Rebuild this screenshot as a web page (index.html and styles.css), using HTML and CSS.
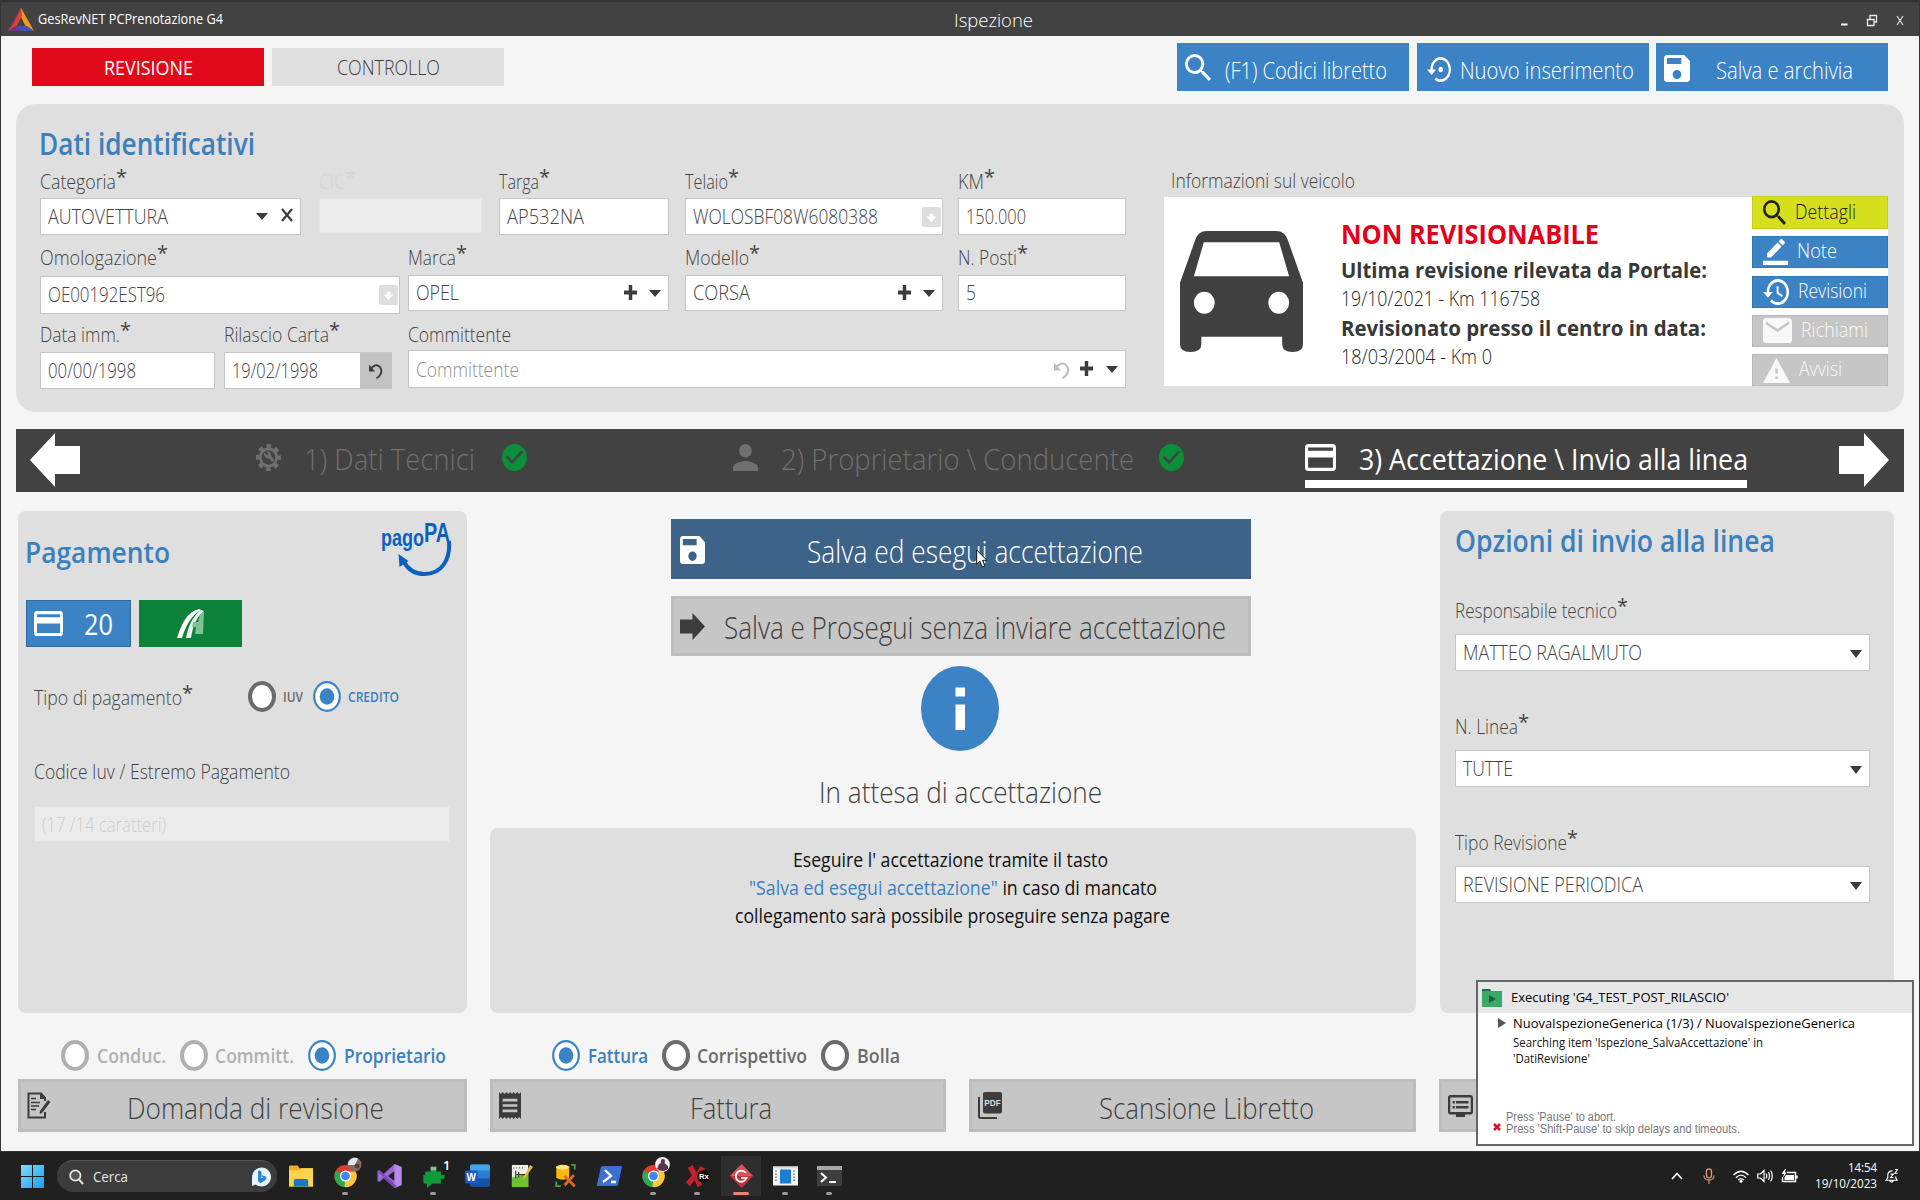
FILE: index.html
```
<!DOCTYPE html>
<html lang="it">
<head>
<meta charset="utf-8">
<title>GesRevNET PCPrenotazione G4</title>
<link rel="stylesheet" href="styles.css">
</head>
<body>
<svg class="defs" width="0" height="0">
  <symbol id="search" viewBox="3 3 17.5 17.5" preserveAspectRatio="none"><path d="M15.5 14h-.79l-.28-.27A6.471 6.471 0 0 0 16 9.5 6.5 6.5 0 1 0 9.5 16c1.61 0 3.09-.59 4.23-1.57l.27.28v.79l5 4.99L20.49 19l-4.99-5zm-6 0C7.01 14 5 11.99 5 9.5S7.01 5 9.5 5 14 7.01 14 9.5 11.99 14 9.5 14z"/></symbol>
  <symbol id="restore" viewBox="0 3 21 18" preserveAspectRatio="none"><path d="M14 12c0-1.1-.9-2-2-2s-2 .9-2 2 .9 2 2 2 2-.9 2-2zm-2-9c-4.97 0-9 4.03-9 9H0l4 4 4-4H5c0-3.87 3.13-7 7-7s7 3.13 7 7-3.13 7-7 7c-1.51 0-2.91-.49-4.06-1.3l-1.42 1.44C8.04 20.3 9.94 21 12 21c4.97 0 9-4.03 9-9s-4.03-9-9-9z"/></symbol>
  <symbol id="history" viewBox="1 3 21 18" preserveAspectRatio="none"><path d="M13 3a9 9 0 0 0-9 9H1l3.89 3.89.07.14L9 12H6c0-3.87 3.13-7 7-7s7 3.13 7 7-3.13 7-7 7c-1.93 0-3.68-.79-4.94-2.06l-1.42 1.42A8.954 8.954 0 0 0 13 21a9 9 0 0 0 0-18zm-1 5v5l4.28 2.54.72-1.21-3.5-2.08V8H12z"/></symbol>
  <symbol id="save" viewBox="3 3 18 18" preserveAspectRatio="none"><path d="M17 3H5c-1.11 0-2 .9-2 2v14c0 1.1.89 2 2 2h14c1.1 0 2-.9 2-2V7l-4-4zm-5 16c-1.66 0-3-1.34-3-3s1.34-3 3-3 3 1.34 3 3-1.34 3-3 3zm3-10H5V5h10v4z"/></symbol>
  <symbol id="pencil" viewBox="0 0 24 24" preserveAspectRatio="none"><path d="M17.75 7L14 3.25l-10 10V17h3.75l10-10zm2.96-2.96a.996.996 0 0 0 0-1.41L18.37.29a.996.996 0 0 0-1.41 0L15 2.25 18.75 6l1.96-1.96zM0 20h24v4H0z"/></symbol>
  <symbol id="mail" viewBox="2 4 20 16" preserveAspectRatio="none"><path d="M20 4H4c-1.1 0-1.99.9-1.99 2L2 18c0 1.1.9 2 2 2h16c1.1 0 2-.9 2-2V6c0-1.1-.9-2-2-2zm0 4l-8 5-8-5V6l8 5 8-5v2z"/></symbol>
  <symbol id="warning" viewBox="1 2 22 19" preserveAspectRatio="none"><path d="M1 21h22L12 2 1 21zm12-3h-2v-2h2v2zm0-4h-2v-4h2v4z"/></symbol>
  <symbol id="car" viewBox="0 0 248 363" preserveAspectRatio="none"><path fill-rule="evenodd" d="M54 0H194C206 0 214 10 218 30L248 155V340Q248 363 227 363Q206 363 206 340V317H43V340Q43 363 21 363Q0 363 0 340V155L30 30C34 10 42 0 54 0ZM48 34L28 136H220L200 34ZM28 215A21 33 0 1 0 70 215A21 33 0 1 0 28 215ZM178 215A21 33 0 1 0 220 215A21 33 0 1 0 178 215Z"/></symbol>
  <symbol id="person" viewBox="4 4 16 16" preserveAspectRatio="none"><path d="M12 12c2.21 0 4-1.79 4-4s-1.79-4-4-4-4 1.79-4 4 1.79 4 4 4zm0 2c-2.67 0-8 1.34-8 4v2h16v-2c0-2.66-5.33-4-8-4z"/></symbol>
  <symbol id="card" viewBox="2 4 20 16" preserveAspectRatio="none"><path d="M20 4H4c-1.11 0-2 .89-2 2v12c0 1.11.89 2 2 2h16c1.11 0 2-.89 2-2V6c0-1.11-.89-2-2-2zm0 14H4v-6h16v6zm0-10H4V6h16v2z"/></symbol>
  <symbol id="check" viewBox="2 2 20 20" preserveAspectRatio="none"><path d="M12 2C6.48 2 2 6.48 2 12s4.48 10 10 10 10-4.48 10-10S17.52 2 12 2zm-2 15l-5-5 1.41-1.41L10 14.17l7.59-7.59L19 8l-9 9z"/></symbol>
  <symbol id="gear" viewBox="0 0 24 24" preserveAspectRatio="none"><circle cx="12" cy="12" r="10.3" fill="none" stroke="currentColor" stroke-width="3.4" stroke-dasharray="4.3 3.79" stroke-dashoffset="2.1"/><circle cx="12" cy="12" r="7.8" fill="none" stroke="currentColor" stroke-width="2.6"/><path d="M8 7.6l2.4 2.3 1.4-1.4-1.8-2c2.800-.6 5 1.500 4.400 4.200l3.200 3.300-2 2-3.300-3.300c-3 .7-5.300-2.200-4.300-5.100z"/></symbol>
  <symbol id="receipt" viewBox="3 2 18 20" preserveAspectRatio="none"><path d="M18 17H6v-2h12v2zm0-4H6v-2h12v2zm0-4H6V7h12v2zM3 22l1.500-1.500L6 22l1.500-1.500L9 22l1.500-1.500L12 22l1.500-1.500L15 22l1.500-1.500L18 22l1.500-1.500L21 22V2l-1.500 1.500L18 2l-1.500 1.500L15 2l-1.500 1.500L12 2l-1.500 1.500L9 2 7.500 3.500 6 2 4.500 3.500 3 2v20z"/></symbol>
  <symbol id="dvr" viewBox="1 3 22 18" preserveAspectRatio="none"><path d="M21 3H3c-1.100 0-2 .9-2 2v12c0 1.100.9 2 2 2h5v2h8v-2h5c1.100 0 1.990-.9 1.990-2L23 5c0-1.100-.9-2-2-2zm0 14H3V5h18v12zm-2-9H8v2h11V8zm0 4H8v2h11v-2zM7 8H5v2h2V8zm0 4H5v2h2v-2z"/></symbol>
  <symbol id="undo" viewBox="0 0 16 20" preserveAspectRatio="none"><path d="M2 8C5 2.500 9 1.500 12 4.500C16 9 14 16 8.500 19" fill="none" stroke="currentColor" stroke-width="2.200"/><path d="M0 2l0 8.500h7z"/></symbol>
  <symbol id="tri" viewBox="0 0 12 7" preserveAspectRatio="none"><path d="M0 0H12L6 7Z"/></symbol>
  <symbol id="plus" viewBox="0 0 12 14" preserveAspectRatio="none"><path d="M4.400 0H7.600V5.200H12V8.800H7.600V14H4.400V8.800H0V5.200H4.400Z"/></symbol>
  <symbol id="arrow" viewBox="0 0 50 54" preserveAspectRatio="none"><path d="M0 13H25V0L50 27L25 54V41H0Z"/></symbol>
  <symbol id="lookup" viewBox="0 0 20 21" preserveAspectRatio="none"><rect width="20" height="21" rx="2" fill="#dedede"/><path d="M8 7h4v3h3l-5 6-5-6h3z" fill="#fff"/></symbol>
  <symbol id="radio-off" viewBox="0 0 28 31"><ellipse cx="14" cy="15.500" rx="12" ry="13.400" fill="#fff" stroke="currentColor" stroke-width="4"/></symbol>
  <symbol id="radio-on" viewBox="0 0 28 31"><ellipse cx="14" cy="15.500" rx="12.800" ry="14.300" fill="#fff" stroke="#3b83c4" stroke-width="2.200"/><ellipse cx="14" cy="15.500" rx="7.300" ry="8.300" fill="#3b83c4"/></symbol>
  <symbol id="chrome" viewBox="0 0 26 26"><circle cx="13" cy="13" r="12" fill="#e33b2e"/><path d="M13 13L2.600 7A12 12 0 0 0 12.500 25Z" fill="#2da94f"/><path d="M13 13L12 25A12 12 0 0 0 24 8H13Z" fill="#fcc934"/><circle cx="13" cy="13" r="6" fill="#fff"/><circle cx="13" cy="13" r="4.700" fill="#4285f4"/></symbol>
</svg>

<div class="window">
  <header class="titlebar">
    <svg class="logo" viewBox="0 0 26 24"><path d="M13 0L26 23L18 19L12 7Z" fill="#f39a1e"/><path d="M13 0L0 23L8 19L14 8Z" fill="#d9442f"/><path d="M13 0L0 23L6 15Z" fill="#8d2f72"/><path d="M0 23L8 18H19L26 23Z" fill="#3e55a5"/><path d="M0 23L8 18L12 23Z" fill="#7b2e86"/></svg>
    <span class="app-name t" data-w="185">GesRevNET PCPrenotazione G4</span>
    <span class="page-name t" data-w="79">Ispezione</span>
    <div class="win-buttons">
      <svg viewBox="0 0 64 14"><path d="M1 10.500H7.500" stroke="#fff" stroke-width="2"/><path d="M27.500 5.500h6.500v6h-6.500zM30 5V1.500h6.500V8H34.500" fill="none" stroke="#e8e8e8" stroke-width="1.300"/><path d="M57 2L63 11M63 2L57 11" stroke="#e8e8e8" stroke-width="1.100"/></svg>
    </div>
  </header>

  <div class="toolbar">
    <button class="tab tab-active"><span class="t" data-w="89">REVISIONE</span></button>
    <button class="tab"><span class="t" data-w="103">CONTROLLO</span></button>
    <div class="actions">
      <button class="action"><svg class="ic-search"><use href="#search"/></svg><span class="t" data-w="162">(F1) Codici libretto</span></button>
      <button class="action"><svg class="ic-restore"><use href="#restore"/></svg><span class="t" data-w="174">Nuovo inserimento</span></button>
      <button class="action action-save"><svg class="ic-save"><use href="#save"/></svg><span class="t" data-w="137">Salva e archivia</span></button>
    </div>
  </div>

  <section class="ident">
    <div class="ident-form">
      <h2><span class="t" data-w="216">Dati identificativi</span></h2>
      <div class="row row-a">
        <label class="field"><span class="label"><span class="t" data-w="76">Categoria</span><i>*</i></span>
          <span class="input"><span class="t" data-w="120">AUTOVETTURA</span><span class="tools"><svg class="ic-tri"><use href="#tri"/></svg><svg class="ic-x" viewBox="0 0 12 14"><path d="M1 1L11 13M11 1L1 13" stroke="#3c3c3c" stroke-width="2.200"/></svg></span></span></label>
        <label class="field faded"><span class="label"><span class="t" data-w="26">CIC</span><i>*</i></span><span class="input"></span></label>
        <label class="field"><span class="label"><span class="t" data-w="40">Targa</span><i>*</i></span><span class="input"><span class="t" data-w="77">AP532NA</span></span></label>
        <label class="field"><span class="label"><span class="t" data-w="43">Telaio</span><i>*</i></span><span class="input"><span class="t" data-w="185">WOLOSBF08W6080388</span><svg class="ic-lookup"><use href="#lookup"/></svg></span></label>
        <label class="field"><span class="label"><span class="t" data-w="26">KM</span><i>*</i></span><span class="input"><span class="t" data-w="60">150.000</span></span></label>
      </div>
      <div class="row row-b">
        <label class="field low"><span class="label"><span class="t" data-w="117">Omologazione</span><i>*</i></span><span class="input"><span class="t" data-w="117">OE00192EST96</span><svg class="ic-lookup"><use href="#lookup"/></svg></span></label>
        <label class="field"><span class="label"><span class="t" data-w="48">Marca</span><i>*</i></span><span class="input"><span class="t" data-w="43">OPEL</span><span class="tools"><svg class="ic-plus"><use href="#plus"/></svg><svg class="ic-tri"><use href="#tri"/></svg></span></span></label>
        <label class="field"><span class="label"><span class="t" data-w="64">Modello</span><i>*</i></span><span class="input"><span class="t" data-w="57">CORSA</span><span class="tools"><svg class="ic-plus"><use href="#plus"/></svg><svg class="ic-tri"><use href="#tri"/></svg></span></span></label>
        <label class="field"><span class="label"><span class="t" data-w="59">N. Posti</span><i>*</i></span><span class="input"><span class="t" data-w="10">5</span></span></label>
      </div>
      <div class="row row-c">
        <label class="field low"><span class="label"><span class="t" data-w="80">Data imm.</span><i>*</i></span><span class="input"><span class="t" data-w="88">00/00/1998</span></span></label>
        <label class="field low"><span class="label"><span class="t" data-w="105">Rilascio Carta</span><i>*</i></span><span class="input with-button"><span class="t" data-w="86">19/02/1998</span><span class="input-button"><svg class="ic-undo"><use href="#undo"/></svg></span></span></label>
        <label class="field"><span class="label"><span class="t" data-w="103">Committente</span></span><span class="input"><span class="t placeholder" data-w="103">Committente</span><span class="tools"><svg class="ic-undo pale"><use href="#undo"/></svg><svg class="ic-plus"><use href="#plus"/></svg><svg class="ic-tri"><use href="#tri"/></svg></span></span></label>
      </div>
    </div>
    <div class="vehicle">
      <div class="vehicle-title"><span class="t" data-w="184">Informazioni sul veicolo</span></div>
      <div class="vehicle-body">
        <div class="vehicle-card">
          <svg class="ic-car"><use href="#car"/></svg>
          <div class="vehicle-text">
            <p class="alert"><span class="t" data-w="258">NON REVISIONABILE</span></p>
            <p class="strong"><span class="t" data-w="366">Ultima revisione rilevata da Portale:</span></p>
            <p><span class="t" data-w="199">19/10/2021 - Km 116758</span></p>
            <p class="strong"><span class="t" data-w="365">Revisionato presso il centro in data:</span></p>
            <p><span class="t" data-w="151">18/03/2004 - Km 0</span></p>
          </div>
        </div>
        <div class="vehicle-buttons">
          <button class="vb vb-lime"><svg class="i1"><use href="#search"/></svg><span class="t" data-w="61">Dettagli</span></button>
          <button class="vb vb-blue"><svg class="i2"><use href="#pencil"/></svg><span class="t" data-w="40">Note</span></button>
          <button class="vb vb-blue"><svg class="i3"><use href="#history"/></svg><span class="t" data-w="69">Revisioni</span></button>
          <button class="vb vb-off"><svg class="i4"><use href="#mail"/></svg><span class="t" data-w="67">Richiami</span></button>
          <button class="vb vb-off"><svg class="i5"><use href="#warning"/></svg><span class="t" data-w="43">Avvisi</span></button>
        </div>
      </div>
    </div>
  </section>

  <nav class="steps">
    <svg class="step-arrow back"><use href="#arrow"/></svg>
    <div class="step step1"><svg class="ic24"><use href="#gear"/></svg><span class="t" data-w="171">1) Dati Tecnici</span><svg class="ic24 ok"><use href="#check"/></svg></div>
    <div class="step step2"><svg class="ic24"><use href="#person"/></svg><span class="t" data-w="353">2) Proprietario \ Conducente</span><svg class="ic24 ok"><use href="#check"/></svg></div>
    <div class="step step3"><svg class="ic-card"><use href="#card"/></svg><span class="t" data-w="389">3) Accettazione \ Invio alla linea</span></div>
    <svg class="step-arrow next"><use href="#arrow"/></svg>
  </nav>

  <main class="columns">
    <section class="panel payment">
      <div class="payment-head">
        <h2><span class="t" data-w="145">Pagamento</span></h2>
        <div class="pagopa">
          <svg viewBox="0 0 70 53"><path d="M67.500 17C69 36 60 50 43 50C33 50 26 45 22 37" fill="none" stroke="#0b5fbf" stroke-width="4"/><path d="M17 30L27 37L18 43Z" fill="#0b5fbf"/></svg>
          <span class="pago t" data-w="43">pago</span><span class="pa t" data-w="26">PA</span>
        </div>
      </div>
      <div class="pay-buttons">
        <button class="pay pay-blue"><svg class="ic-card"><use href="#card"/></svg><span class="t" data-w="29">20</span></button>
        <button class="pay pay-green"><svg class="ic-road" viewBox="0 0 28 30"><path d="M0 29C5 14 10 3 22 0L24 1C14 7 9 16 5 29Z" fill="#fff"/><path d="M9 29C11 18 15 8 24 1L27 2C18 10 16 18 14 29Z" fill="#e9f5ec"/><path d="M27 2L26 25L18 25L19 18H15L16 13H21L23 6Z" fill="#7fc295"/></svg></button>
      </div>
      <div class="pay-type">
        <span class="label"><span class="t" data-w="148">Tipo di pagamento</span><i>*</i></span>
        <svg class="radio dark"><use href="#radio-off"/></svg><span class="mini t" data-w="20">IUV</span>
        <svg class="radio"><use href="#radio-on"/></svg><span class="mini on t" data-w="51">CREDITO</span>
      </div>
      <div class="iuv-label"><span class="t" data-w="256">Codice Iuv / Estremo Pagamento</span></div>
      <div class="input iuv-input"><span class="t" data-w="124">(17 /14 caratteri)</span></div>
    </section>

    <section class="center">
      <button class="big big-blue"><svg class="ic-bigsave"><use href="#save"/></svg><span class="t" data-w="336">Salva ed esegui accettazione</span></button>
      <button class="big big-grey"><svg class="ic-go"><use href="#arrow"/></svg><span class="t" data-w="502">Salva e Prosegui senza inviare accettazione</span></button>
      <svg class="info" viewBox="0 0 78 85"><ellipse cx="39" cy="42.500" rx="39" ry="42.500" fill="#3b83c4"/><path d="M34.500 21.500h9.500v9h-9.500zM34.500 38.500h9.500v25.500h-9.500z" fill="#fff"/></svg>
      <div class="waiting"><span class="t" data-w="283">In attesa di accettazione</span></div>
      <div class="panel message">
        <p><span class="t" data-w="315">Eseguire l' accettazione tramite il tasto</span></p>
        <p><span class="t" data-w="408"><em>"Salva ed esegui accettazione"</em> in caso di mancato</span></p>
        <p><span class="t" data-w="435">collegamento sarà possibile proseguire senza pagare</span></p>
      </div>
    </section>

    <section class="panel options">
      <h2><span class="t" data-w="320">Opzioni di invio alla linea</span></h2>
      <label class="field"><span class="label"><span class="t" data-w="162">Responsabile tecnico</span><i>*</i></span><span class="input"><span class="t" data-w="179">MATTEO RAGALMUTO</span><svg class="ic-tri"><use href="#tri"/></svg></span></label>
      <label class="field"><span class="label"><span class="t" data-w="63">N. Linea</span><i>*</i></span><span class="input"><span class="t" data-w="50">TUTTE</span><svg class="ic-tri"><use href="#tri"/></svg></span></label>
      <label class="field"><span class="label"><span class="t" data-w="112">Tipo Revisione</span><i>*</i></span><span class="input"><span class="t" data-w="180">REVISIONE PERIODICA</span><svg class="ic-tri"><use href="#tri"/></svg></span></label>
    </section>
  </main>

  <div class="choices">
    <div class="choice-group g1">
      <span class="choice off"><svg class="radio"><use href="#radio-off"/></svg><span class="t" data-w="69">Conduc.</span></span>
      <span class="choice off"><svg class="radio"><use href="#radio-off"/></svg><span class="t" data-w="79">Committ.</span></span>
      <span class="choice on"><svg class="radio"><use href="#radio-on"/></svg><span class="t" data-w="102">Proprietario</span></span>
    </div>
    <div class="choice-group g2">
      <span class="choice on"><svg class="radio"><use href="#radio-on"/></svg><span class="t" data-w="60">Fattura</span></span>
      <span class="choice"><svg class="radio"><use href="#radio-off"/></svg><span class="t" data-w="110">Corrispettivo</span></span>
      <span class="choice"><svg class="radio"><use href="#radio-off"/></svg><span class="t" data-w="43">Bolla</span></span>
    </div>
  </div>

  <div class="docs">
    <button class="doc"><svg viewBox="0 0 24 27"><path d="M18 9V6L14 1.500H1.500V25.500H18V20" fill="none" stroke="#3c3c3c" stroke-width="2"/><path d="M13 1V7H18" fill="#3c3c3c"/><path d="M4 6.500h5M4 10.500h9M4 14h8M4 17.500h5" stroke="#3c3c3c" stroke-width="1.700"/><path d="M21 8L23.500 10L15 21L12.500 22L13 19Z" fill="#3c3c3c"/></svg><span class="t" data-w="257">Domanda di revisione</span></button>
    <button class="doc"><svg class="receipt"><use href="#receipt"/></svg><span class="t" data-w="82">Fattura</span></button>
    <button class="doc"><svg viewBox="0 0 24 27"><path d="M1 5V24.500Q1 26 3 26H19" fill="none" stroke="#3c3c3c" stroke-width="2"/><rect x="5" width="19" height="21.500" rx="2" fill="#3c3c3c"/><text class="pdf" x="6.300" y="14" textLength="16.500" lengthAdjust="spacingAndGlyphs">PDF</text></svg><span class="t" data-w="215">Scansione Libretto</span></button>
    <button class="doc"><svg class="dvr"><use href="#dvr"/></svg></button>
  </div>
</div>

<footer class="taskbar">
  <svg class="start" viewBox="0 0 23 23"><defs><linearGradient id="w" x2="1" y2="1"><stop stop-color="#7fdcfb"/><stop offset="1" stop-color="#1f9df0"/></linearGradient></defs><path d="M0 0h11v11H0zM12 0h11v11H12zM0 12h11v11H0zM12 12h11v11H12z" fill="url(#w)"/></svg>
  <div class="searchbox">
    <svg class="lens" viewBox="0 0 15 16"><circle cx="6.300" cy="6.500" r="5.200" fill="#555" stroke="#e6e6e6" stroke-width="1.700"/><path d="M10 10.500L14 15" stroke="#e6e6e6" stroke-width="1.900"/></svg>
    <span class="t" data-w="35">Cerca</span>
    <svg class="bing" viewBox="0 0 20 20"><path d="M10 0a10 10 0 1 1-6 18L0 19.500V10A10 10 0 0 1 10 0Z" fill="#e9f3fc"/><path d="M7 3.500L9.500 4.500V12L13 10.200L10.500 8.800L14.500 10V12.500L9 16L7 14.500Z" fill="#2583dc" stroke="#2583dc"/></svg>
  </div>
  <div class="apps">
    <div class="app"><svg viewBox="0 0 26 24"><path d="M0 2Q0 1 1 1H9L11 4H25V23H0Z" fill="#f0ae20"/><path d="M0 6H11L13 4H25V23H0Z" fill="#fcd34c"/><path d="M5 23V17Q5 15 7 15H18Q20 15 20 17V23Z" fill="#1a78c8"/></svg></div>
    <div class="app run"><svg viewBox="0 0 26 26"><use href="#chrome"/></svg><svg class="avatar" viewBox="0 0 15 15"><circle cx="7.500" cy="7.500" r="7" fill="#8a6b62"/><path d="M1 8A7 7 0 0 1 11 1.500L8 8Z" fill="#dce9ee"/><circle cx="10" cy="9" r="2.500" fill="#5a3c3a"/></svg></div>
    <div class="app"><svg viewBox="0 0 24 24"><path d="M17 0L24 3V21L17 24L6 14L2 18L0 17V7L2 6L6 10ZM17 7L10.500 12L17 17Z" fill="#9a68d6" fill-rule="evenodd"/><path d="M17 0L24 3V21L17 24Z" fill="#b48be8"/><path d="M0 7L2 6L19 22L17 24Z" fill="#7447b4"/></svg></div>
    <div class="app run"><svg viewBox="0 0 24 26"><path d="M3 8H9V3H15V8H20V12H24V16H20V21H11L5 26V21H1V12H3Z" fill="#0f9a3c"/><path d="M9 3H15V7H9Z" fill="#8cbf9a"/></svg><b class="count">1</b></div>
    <div class="app"><svg viewBox="0 0 25 23"><rect x="5" y="0" width="20" height="22" rx="2" fill="#2b7cd3"/><path d="M5 2Q5 0 7 0H23Q25 0 25 2V6H5Z" fill="#41a5ee"/><path d="M5 14H25V20Q25 22 23 22H7Q5 22 5 20Z" fill="#1651aa"/><rect y="6" width="13" height="13" rx="1.500" fill="#1b5cbe"/><text class="w" x="1.500" y="16.500">W</text></svg></div>
    <div class="app"><svg viewBox="0 0 24 25"><path d="M2 1H19V24H2Z" fill="#eef3e8"/><path d="M2 14L19 10V24H2Z" fill="#6cc12e"/><path d="M4 3v2M7 3v2M10 3v2M13 3v2" stroke="#888"/><path d="M6 7V15M6 11H16M9 8V14" stroke="#333" stroke-width="1.200"/><path d="M21 1L24 3L15 15L13 16Z" fill="#e8b93a"/></svg></div>
    <div class="app"><svg viewBox="0 0 24 26"><path d="M2 3Q9-1 16 3V15Q9 19 2 15Z" fill="#f5b912"/><ellipse cx="9" cy="3.500" rx="7" ry="2.700" fill="#ffe27a"/><path d="M18 1h4v5M2 19v5h5" fill="none" stroke="#46a04a" stroke-width="2"/><path d="M11 13L22 24M21 12L11 23" stroke="#e06a22" stroke-width="3"/></svg></div>
    <div class="app"><svg viewBox="0 0 25 22"><path d="M5 1H24Q25 1 25 2L21 20Q20 21 19 21H0Q-.500 20 0 19L4 2Z" fill="#3b6fd0"/><path d="M8 5L14 11L6 17M14 17H19" fill="none" stroke="#fff" stroke-width="2.300"/></svg></div>
    <div class="app run"><svg viewBox="0 0 26 26"><use href="#chrome"/></svg><svg class="avatar" viewBox="0 0 15 15"><circle cx="7.500" cy="7.500" r="7.400" fill="#f3eef0"/><path d="M2 12L4 7L6 6Q5 2 8 2T9.500 6L13 9V12Q8 16 2 12Z" fill="#5b3050"/></svg></div>
    <div class="app run"><svg viewBox="0 0 24 25"><path d="M2 4L7 1L11 9L15 2L20 5L14 13L17 22L12 24L9 17L4 23L0 19L6 12Z" fill="#c9202c"/><circle cx="18" cy="13" r="6.500" fill="#0c0c0c"/><text class="rx" x="13.500" y="16">Rx</text></svg></div>
    <div class="app run current"><svg viewBox="0 0 25 26"><path d="M12.500 0L25 13L12.500 26L0 13Z" fill="#c5303c"/><path d="M12.500 0L25 13H0Z" fill="#d9525a"/><path d="M17 9.500A6 6 0 1 0 18 15H12" fill="none" stroke="#fff" stroke-width="2"/></svg></div>
    <div class="app run"><svg viewBox="0 0 25 19"><path d="M0 0H25V19H0Z" fill="#f3f3f3"/><path d="M0 0H25V2H0Z" fill="#dcdcdc"/><path d="M7 3H18V17H7Z" fill="#1c7fd6"/><path d="M3 4v12M21 4v12" stroke="#999" stroke-dasharray="1.500 1.500" stroke-width="2"/></svg></div>
    <div class="app run"><svg viewBox="0 0 25 20"><path d="M0 0H25V20H0Z" fill="#3e3e3e"/><path d="M0 0H25V4H0Z" fill="#a8a8a8"/><path d="M4 7L9 11.500L4 16M12 16H19" fill="none" stroke="#fff" stroke-width="2"/></svg></div>
  </div>
  <div class="tray">
    <svg class="chev" viewBox="0 0 12 8"><path d="M1 7L6 1.500L11 7" fill="none" stroke="#fff" stroke-width="1.600"/></svg>
    <svg class="mic" viewBox="0 0 12 16"><rect x="3.500" y=".8" width="5" height="9" rx="2.500" fill="none" stroke="#e29a80" stroke-width="1.300"/><path d="M1 7.500Q1 12 6 12T11 7.500M6 12V16" fill="none" stroke="#b98a78" stroke-width="1.300"/></svg>
    <svg class="wifi" viewBox="0 0 16 13"><path d="M.5 5Q8-2.500 15.500 5M3 7.700Q8 2.500 13 7.700M5.300 10Q8 7.200 10.700 10" fill="none" stroke="#fff" stroke-width="1.400"/><circle cx="8" cy="11.300" r="1.500" fill="#fff"/></svg>
    <svg class="vol" viewBox="0 0 17 14"><path d="M.700 5H3.500L7 1.500V12.500L3.500 9H.7Z" fill="none" stroke="#fff" stroke-width="1.200"/><path d="M9 4.500Q10.500 7 9 9.500M11.300 3Q13.700 7 11.300 11M13.600 1.500Q17 7 13.600 12.500" fill="none" stroke="#fff" stroke-width="1.200"/></svg>
    <svg class="batt" viewBox="0 0 17 14"><path d="M6 3.500H14.500V12.500H1.500V8" fill="none" stroke="#fff" stroke-width="1.400"/><path d="M5 6H13V11H3.500V8.500Z" fill="#fff"/><path d="M15 6.500h1.700v3H15zM4 0L.5 5H3L2 8.500L6 3.500H3.800L5 0Z" fill="#fff"/></svg>
    <div class="clock"><span class="t" data-w="29">14:54</span><span class="t" data-w="62">19/10/2023</span></div>
    <svg class="bell" viewBox="0 0 15 16"><path d="M8 2.500Q3 2.500 3 7V10L1 12.500H13L11.500 10V8.500M5 13Q7 16 9 13" fill="none" stroke="#fff" stroke-width="1.200"/><path d="M6 6H9L6 9.500H9M10.500 1H13.500L10.500 5H13.500" fill="none" stroke="#fff" stroke-width="1.100"/></svg>
  </div>
</footer>

<aside class="popup">
  <div class="popup-head">
    <svg viewBox="0 0 20 18"><path d="M0 0H8L9 2H20V18H0Z" fill="#3aa968"/><path d="M0 0H8L9 2H0Z" fill="#1f6f45"/><path d="M7 6L14 10L7 14Z" fill="#1e5c3b"/></svg>
    <span class="t" data-w="218">Executing 'G4_TEST_POST_RILASCIO'</span>
  </div>
  <div class="popup-item"><svg viewBox="0 0 9 11"><path d="M0 0L9 5.500L0 11Z" fill="#555"/></svg><span class="t" data-w="342">NuovaIspezioneGenerica (1/3) / NuovaIspezioneGenerica</span></div>
  <p><span class="t" data-w="250">Searching item 'Ispezione_SalvaAccettazione' in</span></p>
  <p><span class="t" data-w="77">'DatiRevisione'</span></p>
  <div class="popup-foot">
    <svg viewBox="0 0 8 8"><path d="M1 1L7 7M7 1L1 7" stroke="#d3122a" stroke-width="2.600"/></svg>
    <div><span class="t" data-w="110">Press 'Pause' to abort.</span><span class="t" data-w="234">Press 'Shift-Pause' to skip delays and timeouts.</span></div>
  </div>
</aside>

<svg class="cursor" viewBox="0 0 12 19"><path d="M.700 1V15.200L3.900 12.200L6.200 18L8.800 16.900L6.500 11.300H11Z" fill="#fff" stroke="#111" stroke-width="1"/></svg>
<script src="fit.js"></script>
</body>
</html>
```
FILE: fit.js
```
for (const el of document.querySelectorAll('.t[data-w]')) {
  const target = parseFloat(el.dataset.w);
  const natural = el.getBoundingClientRect().width;
  el.style.transform = 'scaleX(' + (target / natural).toFixed(4) + ')';
  el.style.marginRight = (target - natural).toFixed(2) + 'px';
}
```
FILE: styles.css
```
* { box-sizing: border-box; }
html, body { margin: 0; }
body {
  width: 1920px; height: 1200px; overflow: hidden; position: relative;
  display: flex; flex-direction: column;
  font: 300 20px/20px "Open Sans", "Noto Sans", sans-serif;
  color: #3f3f3f; background: #f5f5f5;
}
h2, p { margin: 0; }
button { border: 0; padding: 0; margin: 0; font: inherit; color: inherit; text-align: left; display: flex; align-items: center; }
svg { display: block; flex: none; fill: currentColor; }
.defs { position: absolute; }
.t { display: inline-block; flex: none; white-space: pre; transform-origin: 0 50%; }
i { font-style: normal; font-weight: 400; font-size: 20px; line-height: 0; vertical-align: 5px; }

.window { height: 1151px; flex: none; display: flex; flex-direction: column; border: solid #333; border-width: 0 1px; }

/* title bar */
.titlebar { height: 36px; flex: none; background: #424242; border-top: 2px solid #333; color: #fff; display: flex; align-items: flex-start; padding-left: 7px; }
.logo { width: 26px; height: 24px; margin-top: 6px; }
.app-name { font-size: 14px; font-weight: 400; margin: 8px 0 0 4px; line-height: 18px; }
.page-name { font-size: 19px; line-height: 20px; margin: 8px 0 0 731px; }
.win-buttons { margin-left: auto; padding: 12px 15px 0 0; }
.win-buttons svg { width: 64px; height: 14px; }

/* toolbar */
.toolbar { height: 68px; flex: none; display: flex; align-items: flex-start; padding: 7px 31px 0 31px; }
.tab { width: 232px; height: 38px; margin: 5px 8px 0 0; padding-top: 1px; background: #dfdfdf; justify-content: center; }
.tab-active { background: #e10a1b; color: #fff; font-weight: 400; }
.actions { margin-left: auto; display: flex; gap: 7.5px; }
.action { width: 232px; height: 48px; background: #3b83c4; color: #fff; font-size: 23px; line-height: 24px; }
.action .t { margin-top: 6px; }
.ic-search { width: 26px; height: 27px; margin: 0 14px 0 8px; }
.ic-restore { width: 24px; height: 25px; margin: 4px 9px 0 10px; }
.ic-save { width: 26px; height: 27px; margin: 3px 26px 0 8px; }

/* identification card */
.ident { height: 308px; flex: none; margin: 0 15px; background: #dfdfdf; border-radius: 20px; display: flex; padding-left: 24px; }
.ident h2, .payment h2, .options h2 { font-size: 30px; line-height: 31px; font-weight: 600; color: #3b7fbd; }
.ident-form { width: 1086px; padding-top: 24px; }
.ident h2 { margin: 0 0 12px -1px; height: 31px; }
.row { display: grid; height: 76.5px; align-items: start; }
.row-a { grid-template-columns: 279px 180px 186px 273px 168px; }
.row-a .field:nth-child(1) { width: 261px; }
.row-a .field:nth-child(2) { width: 163px; }
.row-a .field:nth-child(3) { width: 170px; }
.row-a .field:nth-child(4) { width: 258px; }
.row-b { grid-template-columns: 368px 277px 273px 168px; }
.row-b .field:nth-child(1) { width: 360px; }
.row-b .field:nth-child(2) { width: 261px; }
.row-b .field:nth-child(3) { width: 258px; }
.row-c { grid-template-columns: 184px 184px 718px; }
.row-c .field:nth-child(1) { width: 175px; }
.row-c .field:nth-child(2) { width: 168px; }
.field { display: block; }
.label { display: block; height: 27px; line-height: 20px; white-space: nowrap; color: #444; }
.row .label { padding-top: .5px; }
.input { display: flex; align-items: center; height: 36.5px; background: #fff; border: 1.5px solid #c6c6c6; padding: 1px 0 0 6.5px; color: #444; }
.low .label { height: 28px; }
.low .input { height: 38px; }
.row-c .label { height: 26px; padding-top: 1px; }
.row-c .low .label { height: 28px; }
.row-c .input { height: 38px; }
.row-c .low .input { height: 37px; }
.faded .label { color: #d6d6d6; }
.faded .input { background: #ebebeb; border-color: #e4e4e4; height: 35px; }
.tools { margin-left: auto; display: flex; align-items: center; gap: 13px; padding-right: 7px; }
.ic-tri { width: 12px; height: 7px; color: #3c3c3c; }
.ic-x { width: 12px; height: 14px; margin-top: -3px; }
.ic-plus { width: 13px; height: 15px; color: #3c3c3c; margin-top: -2px; }
.row-b .ic-plus { margin-right: -1px; }
.ic-lookup { width: 19px; height: 20px; margin-left: auto; margin-right: 1px; }
.ic-undo { width: 14px; height: 16px; color: #3c3c3c; }
.ic-undo.pale { color: #bdbdbd; width: 16px; height: 18px; margin-right: -3px; }
.placeholder { color: #8f8f8f; }
.row-c .with-button { border-right: 0; padding-top: 0; }
.input-button { margin-left: auto; width: 32px; height: 100%; background: #c3c3c3; display: grid; place-items: center; }

.vehicle { margin-left: 38px; padding-top: 67px; }
.vehicle-title { padding-left: 7px; height: 25px; color: #444; }
.vehicle-body { display: flex; }
.vehicle-card { width: 588px; height: 189px; margin-top: 1px; background: #fff; display: flex; padding: 34px 0 0 16px; }
.ic-car { width: 123px; height: 121px; color: #404040; }
.vehicle-text { margin: -18px 0 0 38px; font-weight: 400; font-size: 19.5px; line-height: 28px; }
.vehicle-text p { height: 28.5px; font-weight: 300; color: #222; }
.vehicle-text .strong { font-weight: 700; font-size: 22px; height: 29.5px; color: #383838; }
.vehicle-text .alert { font-weight: 700; font-size: 27px; height: 42px; line-height: 42px; color: #e3001b; }
.vehicle-buttons { width: 136px; height: 190px; display: flex; flex-direction: column; justify-content: space-between; background: #fff; }
.vb { height: 32px; font-size: 19.5px; padding-left: 11px; box-shadow: inset 0 0 0 1px rgba(0, 0, 0, .08); }
.vb-lime { background: #d5df1e; color: #222; height: 33px; }
.vb-blue { background: #3b83c4; color: #fff; }
.vb-off { background: #c6c6c6; color: #f8f8f8; }
.i1 { width: 23px; height: 25px; margin-right: 9px; }
.i2 { width: 25px; height: 26px; margin-right: 8.5px; }
.i3 { width: 26px; height: 26px; margin-right: 8.5px; }
.i4 { width: 29px; height: 25px; margin-right: 8.5px; }
.i5 { width: 27px; height: 25px; margin-right: 8.5px; }
.vb .t { margin-top: -2px; }

/* steps */
.steps { height: 63px; flex: none; margin: 17px 15px 0; background: #424242; display: flex; font-size: 30px; line-height: 36px; color: #707070; }
.step-arrow { width: 50px; height: 54px; color: #fff; margin-top: 4px; }
.back { transform: scaleX(-1); margin-left: 14px; }
.step { display: flex; align-items: flex-start; height: 62px; padding-top: 12px; }
.step svg { margin-top: 3px; }
.step1 { margin-left: 176px; width: 271px; }
.step2 { margin-left: 206px; width: 451px; }
.ic24 { width: 25px; height: 27px; }
.step .t { margin-left: 23px; }
.step2 .t { margin-left: 22.5px; }
.ok { color: #0a8f3b; }
.step .ok { margin-left: auto; }
.step3 { margin-left: 121px; width: 442px; height: 59px; border-bottom: 8px solid #fff; color: #fff; font-weight: 400; }
.step3 .t { margin-left: 22.5px; }
.steps .ic-card { width: 31px; height: 27px; }
.next { margin-left: 92px; }

/* panels */
.columns { height: 502px; flex: none; margin-top: 19px; padding: 0 25px 0 17px; display: flex; }
.panel { background: #dfdfdf; border-radius: 8px; }
.payment { width: 449px; padding-left: 8px; }
.payment-head { display: flex; justify-content: space-between; padding: 13px 15px 0 0; height: 89px; }
.payment h2 { font-size: 29px; padding-top: 12px; margin-left: -1px; }
.pagopa { width: 71px; height: 53px; position: relative; display: flex; align-items: flex-start; font-family: "Liberation Sans", sans-serif; font-weight: 700; color: #0b5fbf; }
.pagopa svg { position: absolute; inset: 0; width: 71px; height: 53px; }
.pago { font-size: 24px; line-height: 28px; }
.pa { font-size: 27px; line-height: 27px; margin-top: -4px; }
.pay-buttons { display: flex; gap: 8px; }
.pay { height: 47px; }
.pay-blue { width: 105px; background: #3b83c4; border: 1.5px solid #35689a; color: #fff; font-size: 29px; font-weight: 400; line-height: 30px; padding-left: 7px; }
.pay-blue svg { width: 29px; height: 25px; margin-right: 21px; }
.pay-green { width: 103px; background: #0b8238; justify-content: center; }
.ic-road { width: 28px; height: 30px; }
.pay-type { display: flex; align-items: center; height: 31px; margin: 34px 0 0 8px; }
.pay-type .label { width: 214px; height: 20px; margin-top: 3px; }
.radio { width: 28px; height: 31px; color: #6b6b6b; }
.mini { font-size: 14.5px; font-weight: 600; color: #6b6b6b; margin-left: 7px; }
.mini + .radio { margin-left: 10px; }
.mini.on { color: #3b7fbd; }
.iuv-label { margin: 50px 0 0 7.5px; height: 44px; }
.iuv-input { width: 416px; height: 36px; margin-left: 8px; background: #ebebeb; border-color: #e2e2e2; color: #cdcdcd; }

.center { width: 926px; margin: 8px 24px 0 23px; display: flex; flex-direction: column; }
.big { width: 580px; height: 60px; margin-left: 181px; font-size: 31px; line-height: 36px; }
.big .t { margin-top: 2px; }
.big-blue .t { margin-top: 3px; }
.big-blue { background: #3e6389; color: #fff; padding-left: 9px; }
.ic-bigsave { width: 25px; height: 28px; margin-right: 102px; margin-top: 2px; }
.big-grey { margin-top: 17px; background: #c6c6c6; box-shadow: inset 0 0 0 3px #bdbdbd; padding-left: 9px; }
.ic-go { width: 25px; height: 27px; margin-right: 19px; color: #3c3c3c; }
.info { width: 78px; height: 85px; margin: 10px 0 0 431px; }
.waiting { margin: 24px 0 0 329px; font-size: 30px; line-height: 34px; height: 53px; }
.message { height: 185px; padding-top: 18px; font-size: 19.5px; line-height: 28px; font-weight: 400; color: #111; text-align: center; }
.message p { height: 27.8px; padding-right: 1px; }
.message p:nth-child(1) { padding-right: 5px; }
.message em { font-style: normal; color: #3b7fbd; }

.options { width: 454px; padding: 14px 0 0 15px; }
.options h2 { height: 76px; }
.options .field { height: 116px; width: 415px; }
.options .label { height: 33px; }
.options .input { height: 36.5px; padding-top: 2px; }
.options .ic-tri { margin: 1px 7px 0 auto; width: 12px; height: 8px; }

/* radio groups */
.choices { height: 66px; flex: none; padding-top: 27px; display: flex; font-weight: 600; color: #6b6b6b; }
.choice-group { display: flex; }
.g1 { margin-left: 60px; width: 491px; }
.choice { display: flex; align-items: center; height: 31px; }
.choice .t { margin-left: 7.5px; }
.choice + .choice { margin-left: 14px; }
.choice.off, .choice.off .radio { color: #b0b0b0; }
.choice.on { color: #3b7fbd; }

/* document buttons */
.docs { height: 53px; flex: none; padding: 0 25px 0 17px; display: grid; grid-template-columns: 449px 456px 447px 454px; column-gap: 23px; font-size: 30px; line-height: 34px; }
.doc { height: 53px; background: #c6c6c6; box-shadow: inset 0 0 0 3px #bdbdbd; }
.doc svg { width: 24px; height: 27px; margin-left: 9px; color: #3c3c3c; }
.doc .t { margin-top: 4px; }
.doc:nth-child(1) .t { margin-left: 76px; }
.doc:nth-child(2) .t { margin-left: 169px; }
.doc:nth-child(3) .t { margin-left: 97px; }
.doc .receipt { width: 22px; }
.doc .dvr { width: 25px; height: 22px; }
.pdf { font: 700 8.5px "Liberation Sans", sans-serif; fill: #ddd; }

/* taskbar */
.taskbar { height: 49px; flex: none; background: #202020; border-top: 1px solid #333; display: flex; align-items: center; color: #fff; font-weight: 400; }
.start { width: 23px; height: 23px; margin-left: 21px; }
.searchbox { width: 220px; height: 32px; margin-left: 13px; border-radius: 16px; background: #3c3c3c; border-top: 1px solid #555; display: flex; align-items: center; padding: 0 6px 0 12px; font-size: 15px; color: #e4e4e4; }
.searchbox .t { margin-top: -2px; }
.lens { width: 15px; height: 16px; margin-right: 9px; }
.bing { width: 19px; height: 20px; margin-left: auto; }
.apps { display: flex; margin-left: 2px; }
.app { width: 44px; height: 40px; display: grid; place-items: center; position: relative; }
.app > svg { width: 25px; height: 24px; }
.app > .avatar { position: absolute; left: 24px; top: 1px; width: 15px; height: 15px; }
.count { position: absolute; left: 32px; top: 2px; font-size: 13px; line-height: 14px; font-weight: 600; }
.run::after { content: ""; position: absolute; left: 19px; top: 36px; width: 6px; height: 3px; border-radius: 2px; background: #9a9a9a; }
.current { background: linear-gradient(#2e2e2e, #2e2e2e) center / 40px 40px no-repeat; }
.current::after { left: 14px; width: 16px; background: #ee8374; }
.w { font: 700 10px "Liberation Sans", sans-serif; fill: #fff; }
.rx { font: 700 8px "Liberation Sans", sans-serif; fill: #fff; }
.tray { margin-left: auto; padding-right: 21px; display: flex; align-items: center; }
.chev { width: 12px; height: 8px; margin-right: 20px; }
.mic { width: 12px; height: 16px; margin-right: 18px; }
.wifi { width: 16px; height: 13px; margin-right: 8px; }
.vol { width: 17px; height: 14px; margin-right: 7px; }
.batt { width: 17px; height: 14px; margin-right: 17px; }
.clock { display: flex; flex-direction: column; align-items: flex-end; font-size: 12.5px; line-height: 16px; margin-right: 8px; }
.bell { width: 14px; height: 16px; }

/* runner popup */
.popup { position: absolute; left: 1476px; top: 980px; width: 438px; height: 166px; background: #fff; border: 2px solid #666; color: #111; font-size: 12px; line-height: 16px; font-weight: 400; }
.popup-head { height: 31px; background: #e7e7e7; display: flex; align-items: center; padding-left: 4px; font-size: 13.5px; font-weight: 500; color: #000; }
.popup-head .t { margin-top: -2px; }
.popup-head svg { width: 20px; height: 18px; margin-right: 9px; }
.popup-item { display: flex; align-items: center; height: 22px; padding: 0 0 2px 20px; font-size: 13.5px; font-weight: 500; color: #000; }
.popup-item svg { width: 8px; height: 10px; margin-right: 7px; }
.popup p { padding-left: 35px; height: 16px; }
.popup-foot { display: flex; align-items: flex-end; margin: 44px 0 0 15px; color: #777; font-size: 12px; line-height: 12px; font-family: "Liberation Sans", sans-serif; }
.popup-foot svg { width: 8px; height: 8px; margin: 0 5px 4px 0; }
.popup-foot div { display: flex; flex-direction: column; align-items: flex-start; }

.cursor { position: absolute; left: 976px; top: 549px; width: 12px; height: 19px; }
```
